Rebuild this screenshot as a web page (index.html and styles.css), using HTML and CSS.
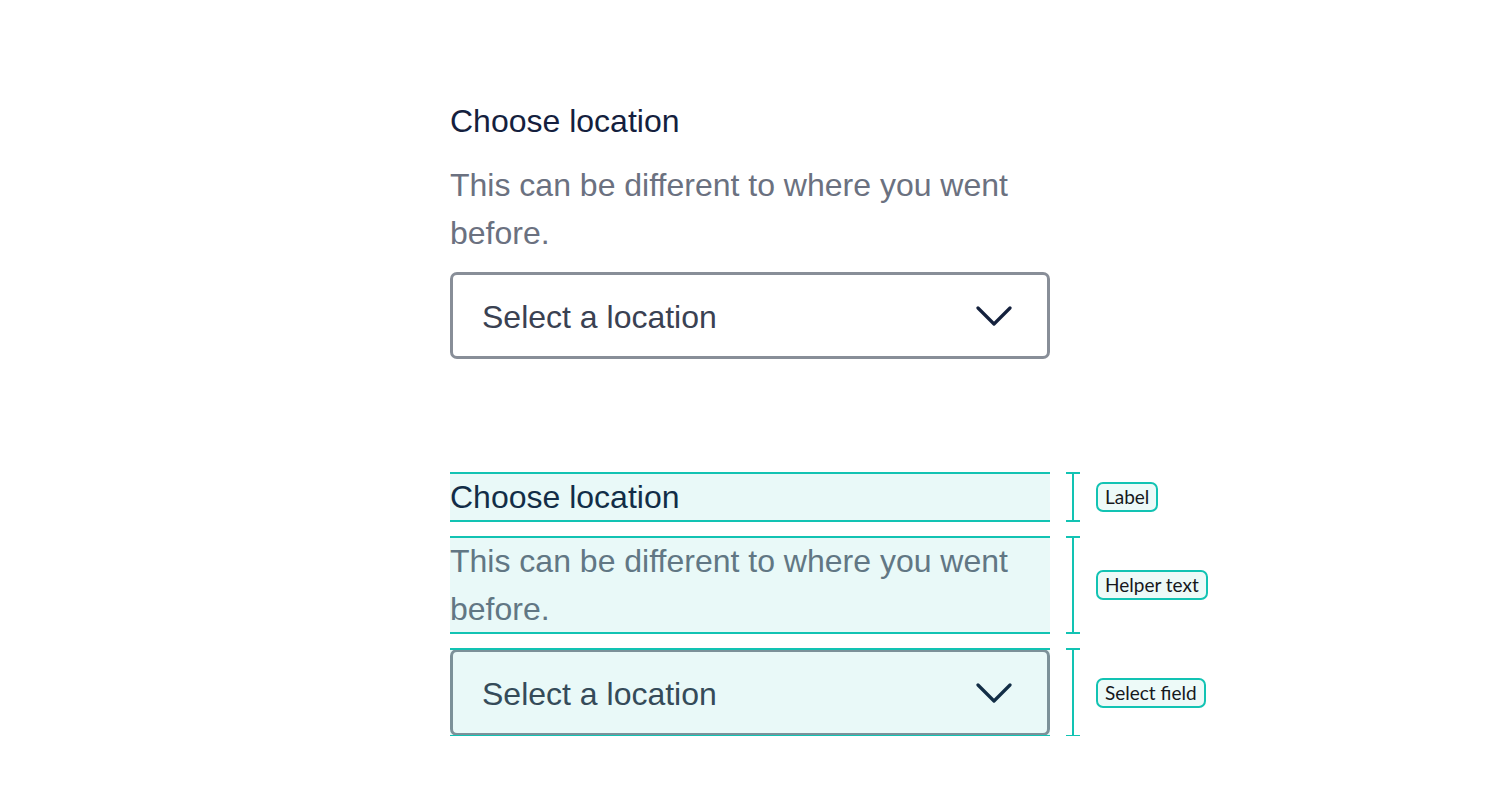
FILE: index.html
```html
<!DOCTYPE html>
<html lang="en">
<head>
<meta charset="utf-8">
<title>Select field anatomy</title>
<link rel="stylesheet" href="styles.css">
</head>
<body>
<main class="page">
  <section class="field">
    <div class="label">Choose location</div>
    <div class="helper">This can be different to where you went before.</div>
    <div class="select">
      <span class="select-text">Select a location</span>
      <svg class="chevron" width="36" height="22" viewBox="0 0 36 22" aria-hidden="true"><path d="M2 3 L18 19 L34 3" fill="none" stroke="#14213d" stroke-width="3.2" stroke-linecap="round" stroke-linejoin="round"/></svg>
    </div>
  </section>

  <section class="anatomy">
    <div class="part"><div class="label">Choose location</div></div>
    <div class="bracket"></div>
    <div class="tag-cell"><span class="tag">Label</span></div>

    <div class="part"><div class="helper">This can be different to where you went before.</div></div>
    <div class="bracket"></div>
    <div class="tag-cell"><span class="tag">Helper text</span></div>

    <div class="part">
      <div class="select">
        <span class="select-text">Select a location</span>
        <svg class="chevron" width="36" height="22" viewBox="0 0 36 22" aria-hidden="true"><path d="M2 3 L18 19 L34 3" fill="none" stroke="#14213d" stroke-width="3.2" stroke-linecap="round" stroke-linejoin="round"/></svg>
      </div>
    </div>
    <div class="bracket"></div>
    <div class="tag-cell"><span class="tag">Select field</span></div>
  </section>
</main>
</body>
</html>
```

FILE: styles.css
```css
html, body {
  margin: 0;
  padding: 0;
  background: #ffffff;
}

.page {
  padding: 97px 0 0 450px;
  font-family: "Liberation Sans", Arial, sans-serif;
}

.field {
  width: 600px;
  display: flex;
  flex-direction: column;
  gap: 16px;
}

.label {
  font-size: 32px;
  line-height: 48px;
  color: #151f3e;
}

.helper {
  font-size: 32px;
  line-height: 48px;
  color: #6b7180;
}

.select {
  box-sizing: border-box;
  height: 87px;
  margin-top: -1px;
  border: 3px solid #888e98;
  border-radius: 7px;
  background: #ffffff;
  display: flex;
  align-items: center;
  justify-content: space-between;
  padding: 4px 35px 0 29px;
}

.part .select {
  margin-top: 0;
}

.select-text {
  font-size: 32px;
  color: #3a4152;
}

.chevron {
  display: block;
  margin-top: -4px;
}

.anatomy {
  margin-top: 114px;
  display: grid;
  grid-template-columns: 600px 14px auto;
  column-gap: 16px;
  row-gap: 16px;
}

.part {
  position: relative;
}

.part::after {
  content: "";
  position: absolute;
  left: 0;
  right: 0;
  top: -1px;
  bottom: -1px;
  border-top: 2px solid #12c3b3;
  border-bottom: 2px solid #12c3b3;
  background: rgba(0, 190, 172, 0.085);
  pointer-events: none;
}

.bracket {
  position: relative;
  margin: -1px 0;
  border-top: 2px solid #12c3b3;
  border-bottom: 2px solid #12c3b3;
}

.bracket::before {
  content: "";
  position: absolute;
  left: 6px;
  top: 0;
  bottom: 0;
  width: 2px;
  background: #12c3b3;
}

.tag-cell {
  display: flex;
  align-items: center;
}

.tag {
  font-family: "Lato", "Noto Sans", sans-serif;
  font-size: 19px;
  line-height: 26px;
  color: #16181c;
  padding: 0 7px;
  border: 2px solid #12c3b3;
  border-radius: 7px;
  background: #edfaf8;
}
```
